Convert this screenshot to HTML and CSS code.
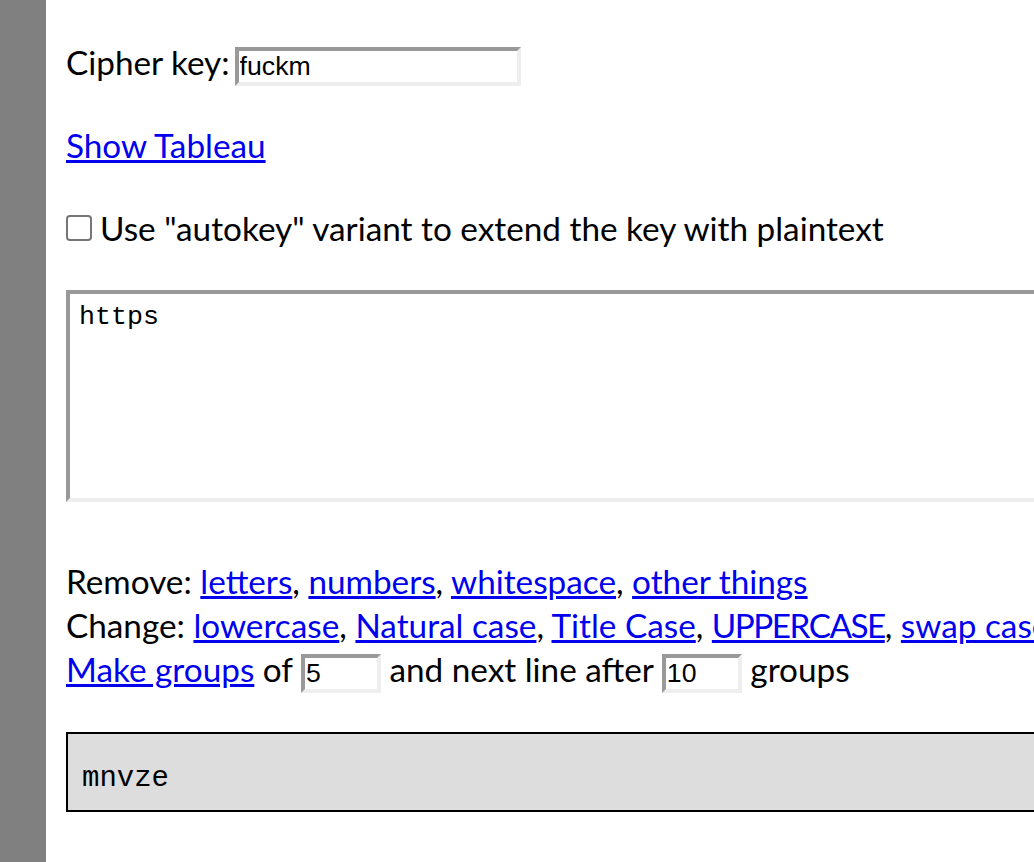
FILE: index.html
```html
<!DOCTYPE html>
<html lang="en">
<head>
<meta charset="utf-8">
<title>Vigenère Cipher</title>
<link rel="stylesheet" href="styles.css">
</head>
<body>
<div class="page">
  <div class="sidebar"></div>
  <main class="content">
    <div class="row row-key">
      <label class="key-label" for="key">Cipher key:</label><input class="field field-key" id="key" type="text" value="fuckm">
    </div>
    <div class="row row-tableau">
      <a href="#">Show Tableau</a>
    </div>
    <div class="row row-autokey">
      <input class="check" type="checkbox" id="autokey"><label for="autokey">Use "autokey" variant to extend the key with plaintext</label>
    </div>
    <textarea class="input-text">https</textarea>
    <div class="tools">
      <div class="row">Remove: <a href="#">letters</a>, <a href="#">numbers</a>, <a href="#">whitespace</a>, <a href="#">other things</a></div>
      <div class="row">Change: <a href="#">lowercase</a>, <a href="#">Natural case</a>, <a href="#">Title Case</a>, <a class="caps" href="#">UPPERCASE</a>, <a href="#">swap case</a></div>
      <div class="row"><a href="#">Make groups</a> of <input class="field field-num" type="text" value="5"> and next line after <input class="field field-num" type="text" value="10"> groups</div>
    </div>
    <div class="output">mnvze</div>
  </main>
</div>
</body>
</html>
```
FILE: styles.css
```css
html, body {
  margin: 0;
  padding: 0;
  overflow: hidden;
  background: #ffffff;
}

body {
  font-family: "Lato", "Open Sans", sans-serif;
  font-size: 33.3px;
  color: #000000;
}

.page {
  display: flex;
  min-height: 100vh;
}

.sidebar {
  flex: 0 0 46px;
  background: #808080;
}

.content {
  flex: 0 0 1200px;
  padding: 40px 0 0 20px;
}

.row {
  line-height: 44px;
  white-space: nowrap;
}

a {
  color: #0000ee;
  text-decoration: underline;
}

.caps {
  letter-spacing: -1.5px;
}

.key-label {
  margin-right: 5px;
}

.row-tableau {
  margin-top: 37px;
}

.row-autokey {
  margin-top: 39px;
}

.field {
  box-sizing: border-box;
  height: 39px;
  margin: 0;
  padding: 0 1px;
  border-style: solid;
  border-width: 4px;
  border-color: #999999 #eeeeee #eeeeee #999999;
  font-family: "Liberation Sans", Arial, sans-serif;
  font-size: 26.67px;
  color: #000000;
  background: #ffffff;
  vertical-align: baseline;
  outline: none;
}

.field-key {
  width: 286px;
}

.field-num {
  width: 80px;
}

.check {
  -webkit-appearance: none;
  appearance: none;
  box-sizing: border-box;
  width: 26px;
  height: 26px;
  margin: 0 8px 0 0;
  border: 2px solid #767676;
  border-radius: 4px;
  background: #ffffff;
  vertical-align: baseline;
}

.input-text {
  display: block;
  box-sizing: border-box;
  width: 1100px;
  height: 212px;
  margin: 40px 0 0 0;
  padding: 8px 9px;
  border-style: solid;
  border-width: 4px;
  border-color: #999999 #eeeeee #eeeeee #999999;
  font-family: "Liberation Mono", "Courier New", monospace;
  font-size: 26.67px;
  color: #000000;
  background: #ffffff;
  resize: none;
  outline: none;
}

.tools {
  margin-top: 57px;
}

.output {
  box-sizing: border-box;
  width: 1100px;
  height: 80px;
  margin-top: 39px;
  padding: 28px 14px 0;
  border: 2px solid #000000;
  background: #dddddd;
  font-family: "Liberation Mono", "Courier New", monospace;
  font-size: 29px;
  line-height: normal;
}
```
